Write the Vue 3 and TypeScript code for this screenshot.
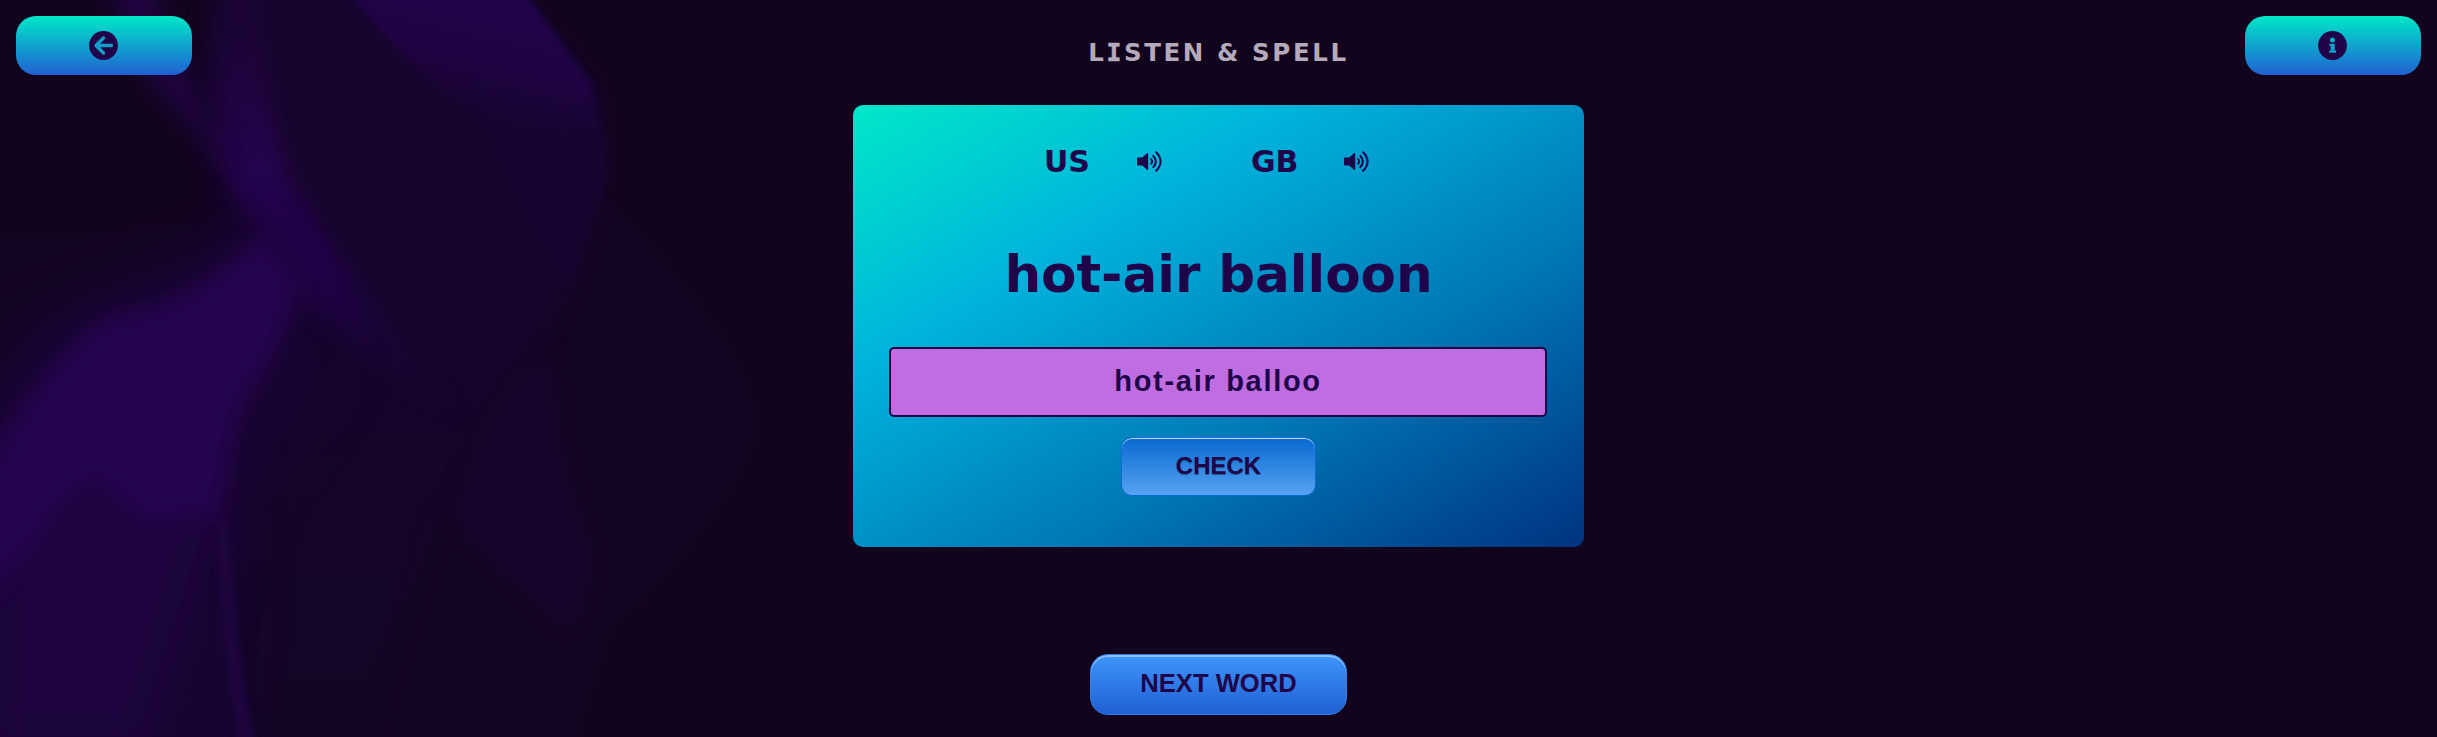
<script setup lang="ts">
import { ref } from 'vue'

const word = 'hot-air balloon'
const answer = ref('hot-air balloo')
const accents: string[] = ['US', 'GB']
</script>

<template>
  <div class="page">
    <svg class="backdrop" viewBox="0 0 820 737" aria-hidden="true">
      <defs>
        <filter id="soft" x="-30%" y="-30%" width="160%" height="160%" color-interpolation-filters="sRGB"><feGaussianBlur stdDeviation="10" /></filter>
        <filter id="softer" x="-40%" y="-40%" width="180%" height="180%" color-interpolation-filters="sRGB"><feGaussianBlur stdDeviation="24" /></filter>
        <filter id="crisp" x="-30%" y="-10%" width="160%" height="120%" color-interpolation-filters="sRGB"><feGaussianBlur stdDeviation="3" /></filter>
        <linearGradient id="veil" x1="0" y1="0" x2="0" y2="1">
          <stop offset="0" stop-color="#19042f" />
          <stop offset="0.45" stop-color="#17042b" />
          <stop offset="1" stop-color="#140524" />
        </linearGradient>
        <linearGradient id="crest" gradientUnits="userSpaceOnUse" x1="500" y1="0" x2="470" y2="130">
          <stop offset="0" stop-color="#20044a" />
          <stop offset="0.5" stop-color="#1e0442" />
          <stop offset="1" stop-color="#1b0438" stop-opacity="0" />
        </linearGradient>
        <linearGradient id="fold" gradientUnits="userSpaceOnUse" x1="220" y1="0" x2="450" y2="420">
          <stop offset="0" stop-color="#1e0442" stop-opacity="0.3" />
          <stop offset="0.35" stop-color="#24044f" />
          <stop offset="0.6" stop-color="#20044a" />
          <stop offset="1" stop-color="#19042f" stop-opacity="0.2" />
        </linearGradient>
      </defs>
      <path d="M600 190Q670 260 725 340Q765 400 752 450Q700 550 610 630L570 760H-20V240Z" fill="#140522" filter="url(#crisp)" />
      <path d="M215 -20H510L594 85Q612 160 602 190L570 290L530 370L440 520L360 760H160L240 400L200 100Z" fill="url(#veil)" filter="url(#soft)" />
      <path d="M440 -10H518L594 85Q612 160 602 190L570 290Q500 190 440 -10Z" fill="#180430" filter="url(#crisp)" />
      <path d="M340 -20H516L590 82L598 130Q540 140 480 115Q420 85 340 -20Z" fill="url(#crest)" filter="url(#crisp)" />
      <path d="M552 350Q545 430 592 560L570 630Q500 570 455 520Q480 420 552 350Z" fill="#18042e" filter="url(#soft)" />
      <path d="M225 -40Q205 90 220 160L285 290Q370 370 465 420Q350 280 290 180Q260 90 250 -40Z" fill="url(#fold)" filter="url(#soft)" />
      <path d="M100 -30L150 80L225 170L205 110L145 -30Z" fill="#1e0440" filter="url(#soft)" />
      <path d="M20 320L120 280L250 220L340 380L250 500L230 760H-40V450Z" fill="#180430" filter="url(#softer)" />
      <path d="M262 240L292 280Q285 340 240 400Q224 460 228 535L160 760H-30V455Q50 350 110 315Q190 310 262 240Z" fill="#1d043e" filter="url(#softer)" />
      <path d="M228 535L150 760H240Z" fill="#190431" filter="url(#soft)" />
      <path d="M262 235L297 280Q287 340 242 400Q224 460 219 515L140 520L100 480Q60 490 40 540L-20 600V485Q50 350 110 318Q190 310 262 235Z" fill="#24044f" filter="url(#soft)" />
      <path d="M216 520Q218 640 240 750H256Q232 630 230 520Z" fill="#1d043e" filter="url(#crisp)" />
    </svg>

    <header class="topbar">
      <button class="nav-btn" aria-label="Back">
        <svg viewBox="0 0 29 29" class="nav-icon">
          <circle cx="14.5" cy="14.5" r="14.4" fill="#20044a" />
          <path d="M14.5 7L7 14.5L14.5 22M7.4 14.5H22.4" fill="none" stroke="#129fc9" stroke-width="3.4" stroke-linecap="round" stroke-linejoin="round" />
        </svg>
      </button>
      <h1 class="title">L<span class="slab">I</span>STEN &amp; SPELL</h1>
      <button class="nav-btn" aria-label="Info">
        <svg viewBox="0 0 29 29" class="nav-icon">
          <circle cx="14.5" cy="14.5" r="14.4" fill="#20044a" />
          <circle cx="14.5" cy="9.1" r="2.5" fill="#0cb0c9" />
          <path d="M11.4 12.7H16.8V19.5H18V21.8H11.2V19.5H12.7V15H11.4Z" fill="#129fc9" />
        </svg>
      </button>
    </header>

    <main class="card">
      <div class="accents">
        <div v-for="accent in accents" :key="accent" class="accent">
          <span class="accent-name">{{ accent }}</span>
          <svg class="speaker" viewBox="0 0 25 21" aria-hidden="true">
            <path d="M1 6.5H5.3L10 2.3Q11.2 1.5 11.2 3V18Q11.2 19.5 10 18.7L5.3 14.5H1Q0 14.5 0 13.5V7.5Q0 6.5 1 6.5Z" fill="#20044a" />
            <path d="M14.1 8.2Q16.1 10.5 14.1 12.8M16.3 4.9Q21.3 10.5 16.3 16.1M19.2 1.2Q28 10.5 19.2 19.8" fill="none" stroke="#20044a" stroke-width="2" stroke-linecap="round" />
          </svg>
        </div>
      </div>
      <h2 class="word">{{ word }}</h2>
      <input v-model="answer" class="answer" type="text" spellcheck="false" />
      <button class="check">CHECK</button>
    </main>

    <button class="next">NEXT WORD</button>
  </div>
</template>

<style>
body {
  margin: 0;
  background: #13041e;
}
</style>

<style scoped>
.page {
  position: relative;
  display: flex;
  flex-direction: column;
  align-items: center;
  width: 100%;
  height: 737px;
  overflow: hidden;
  background: #13041e;
  font-family: Verdana, 'DejaVu Sans', sans-serif;
  color: #20044a;
}
.backdrop {
  position: absolute;
  left: 0;
  top: 0;
  width: 820px;
  height: 737px;
}
.topbar {
  position: relative;
  display: flex;
  justify-content: space-between;
  width: 100%;
  height: 105px;
  padding: 16px 16px 0;
  box-sizing: border-box;
}
.nav-btn {
  display: flex;
  align-items: center;
  justify-content: center;
  width: 176px;
  height: 59px;
  padding: 0 1px 0 0;
  border: 0;
  border-radius: 20px;
  background: linear-gradient(#00e8c8, #2060d2);
}
.nav-icon {
  width: 29px;
  height: 29px;
}
.title {
  margin: 22px 0 0;
  font-size: 24.5px;
  line-height: 30px;
  letter-spacing: 2.6px;
  color: #b5a9bc;
}
.slab {
  font-family: 'DejaVu Sans Mono', monospace;
  -webkit-text-stroke: 0.6px #b5a9bc;
}
.card {
  position: relative;
  display: flex;
  flex-direction: column;
  align-items: center;
  width: 731px;
  height: 442px;
  flex: none;
  border-radius: 10px;
  background: linear-gradient(to bottom right, #00e8c8 0%, #00b4dc 30%, #0077b6 65%, #003380 100%);
}
.accents {
  display: flex;
  gap: 89px;
  margin: 38px 24px 0 0;
  height: 36px;
}
.accent {
  display: flex;
  align-items: center;
  justify-content: space-between;
  width: 118px;
}
.accent-name {
  font-size: 30px;
  font-weight: bold;
}
.speaker {
  width: 25px;
  height: 21px;
}
.word {
  margin: 63px 0 0;
  font-size: 51.5px;
  line-height: 64px;
}
.answer {
  box-sizing: border-box;
  width: 658px;
  height: 70px;
  margin: 41px 1px 0 0;
  padding: 0 0 1px;
  border: 2px solid #20044a;
  border-radius: 5px;
  outline: none;
  background: #c06de1;
  color: #20044a;
  text-align: center;
  font: bold 29px 'Liberation Sans', Arial, sans-serif;
  letter-spacing: 1.7px;
}
.check {
  box-sizing: border-box;
  width: 195px;
  height: 59px;
  margin: 20px 0 0;
  padding: 0 0 1px;
  border: 1px solid #0d6bd0;
  border-radius: 11px;
  background: linear-gradient(#0869d0, #57a3f3);
  box-shadow: inset 0 1px 0 #c5dcf5;
  color: #20044a;
  font: bold 24px 'Liberation Sans', Arial, sans-serif;
  text-shadow: 0 1px 1px rgba(0, 0, 0, 0.4);
}
.next {
  position: relative;
  box-sizing: border-box;
  width: 257px;
  height: 61px;
  margin-top: 107px;
  padding: 0 0 2px;
  border: 1px solid #2f80ee;
  border-radius: 18px;
  background: linear-gradient(#3e95fc, #2060d2);
  box-shadow: inset 0 2px 0 #8dbffd;
  color: #20044a;
  font: bold 25.6px 'Liberation Sans', Arial, sans-serif;
}
</style>
